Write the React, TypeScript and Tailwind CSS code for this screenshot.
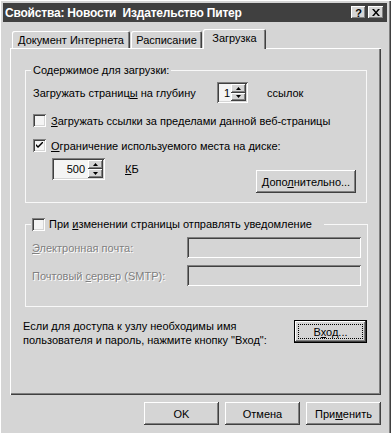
import type { ReactNode } from 'react';

const raised =
  'shadow-[inset_-1px_-1px_0_#404040,inset_1px_1px_0_#ffffff,inset_-2px_-2px_0_#808080]';
const sunken =
  'shadow-[inset_1px_1px_0_#808080,inset_-1px_-1px_0_#ffffff,inset_2px_2px_0_#404040,inset_-2px_-2px_0_#d5d5d5]';

function U({ children }: { children: ReactNode }) {
  return <span className="underline underline-offset-[1px]">{children}</span>;
}

function SpinArrow({ up }: { up?: boolean }) {
  return (
    <div className={`flex-1 flex items-center justify-center bg-[#d5d5d5] ${raised}`}>
      <svg width="5" height="3" viewBox="0 0 5 3">
        {up ? <path d="M2.5 0 L5 3 L0 3 Z" fill="#000" /> : <path d="M0 0 L5 0 L2.5 3 Z" fill="#000" />}
      </svg>
    </div>
  );
}

function Spinner({ value, className, align }: { value: string; className: string; align: string }) {
  return (
    <div className={`flex p-[2px] bg-[#f4f4f4] ${sunken} ${className}`}>
      <div className={`flex-1 flex items-center ${align}`}>{value}</div>
      <div className="flex flex-col w-[15px]">
        <SpinArrow up />
        <SpinArrow />
      </div>
    </div>
  );
}

function Checkbox({ checked }: { checked?: boolean }) {
  return (
    <div className={`w-[13px] h-[13px] shrink-0 bg-[#f4f4f4] flex items-center justify-center ${sunken}`}>
      {checked && (
        <svg width="7" height="7" viewBox="0 0 7 7">
          <path d="M0 2 L0 4 L2 6 L7 1 L7 -1 L2 4 Z" fill="#000" />
        </svg>
      )}
    </div>
  );
}

function Button({ children, className }: { children: ReactNode; className: string }) {
  return (
    <div className={`flex items-center justify-center bg-[#d5d5d5] ${raised} ${className}`}>{children}</div>
  );
}

export default function App() {
  return (
    <div
      className="w-[391px] h-[433px] overflow-hidden bg-[#d5d5d5] text-[11px] leading-[14px] text-black pt-[3px] pl-[3px] pr-[4px] shadow-[inset_1px_1px_0_#ffffff,inset_-1px_0_0_#404040,inset_-2px_0_0_#808080]"
      style={{ fontFamily: '"Liberation Sans", Arial, sans-serif' }}
    >
      {/* Title bar */}
      <div className="h-[19px] bg-[#404040] flex items-center pl-[2px] pr-[3px]">
        <span className="text-white font-bold text-[12px] tracking-[-0.2px]">
          Свойства: Новости&nbsp; Издательство Питер
        </span>
        <div className="ml-auto flex gap-[2px]">
          <Button className="w-[15px] h-[13px] font-bold text-[11px]">?</Button>
          <Button className="w-[16px] h-[13px]">
            <svg width="8" height="7" viewBox="0 0 8 7">
              <path d="M0 0 L2 0 L4 2.5 L6 0 L8 0 L5 3.5 L8 7 L6 7 L4 4.5 L2 7 L0 7 L3 3.5 Z" fill="#000" />
            </svg>
          </Button>
        </div>
      </div>

      <div className="pl-[7px] pr-[6px]">
        {/* Tabs */}
        <div className="mt-[7px] h-[19px] flex items-end">
          <div className="ml-[2px] w-[118px] h-[17px] flex items-center justify-center rounded-t-[2px] shadow-[inset_1px_1px_0_#ffffff,inset_-1px_0_0_#404040,inset_-2px_0_0_#808080]">
            Документ Интернета
          </div>
          <div className="ml-[1px] w-[71px] h-[17px] flex items-center justify-center rounded-t-[2px] shadow-[inset_1px_1px_0_#ffffff,inset_-1px_0_0_#404040,inset_-2px_0_0_#808080]">
            Расписание
          </div>
          <div className="relative z-10 -mb-px ml-[1px] w-[63px] h-[20px] pb-[2px] bg-[#d5d5d5] flex items-center justify-center rounded-t-[2px] shadow-[inset_1px_1px_0_#ffffff,inset_-1px_0_0_#404040,inset_-2px_0_0_#808080]">
            Загрузка
          </div>
        </div>

        {/* Panel */}
        <div className="h-[347px] pt-[15px] pl-[15px] pr-[14px] shadow-[inset_1px_1px_0_#ffffff,inset_-1px_-1px_0_#404040,inset_-2px_-2px_0_#808080]">
          <fieldset className="border border-[#f8f8f8] pl-[5px] pr-[10px] pb-[9px]">
            <legend className="px-[2px] leading-[14px]">Содержимое для загрузки:</legend>
            <div className="pl-[2px]">
              <div className="mt-[5px] flex items-center h-[21px]">
                <span className="w-[184px]">
                  Загружать страниц<U>ы</U> на глубину
                </span>
                <Spinner value="1" className="w-[31px] h-[21px]" align="justify-start pl-[5px]" />
                <span className="ml-[19px]">ссылок</span>
              </div>
              <div className="mt-[11px] flex items-center h-[13px]">
                <Checkbox />
                <span className="ml-[5px]">
                  <U>З</U>агружать ссылки за пределами данной веб-страницы
                </span>
              </div>
              <div className="mt-[12px] flex items-center h-[13px]">
                <Checkbox checked />
                <span className="ml-[5px]">
                  <U>О</U>граничение используемого места на диске:
                </span>
              </div>
              <div className="mt-[6px] flex items-start h-[35px]">
                <Spinner value="500" className="ml-[19px] w-[53px] h-[22px]" align="justify-end pr-[3px]" />
                <span className="ml-[20px] mt-[4px]">
                  <U>К</U>Б
                </span>
                <Button className="ml-auto mt-[12px] w-[100px] h-[23px]">
                  <span>
                    Допо<U>л</U>нительно...
                  </span>
                </Button>
              </div>
            </div>
          </fieldset>

          <fieldset className="mt-[14px] border border-[#f8f8f8] pl-[5px] pr-[6px] pb-[20px]">
            <legend className="pl-[1px] pr-[12px] leading-[14px]">
              <div className="flex items-center gap-[4px]">
                <Checkbox />
                <span>
                  При <U>и</U>зменении страницы отправлять уведомление
                </span>
              </div>
            </legend>
            <div className="pl-[1px] text-[#808080] [text-shadow:1px_1px_0_#ffffff]">
              <div className="mt-[6px] flex items-center h-[21px]">
                <span className="w-[155px]">
                  <U>Э</U>лектронная почта:
                </span>
                <div className={`w-[174px] h-[21px] ${sunken}`} />
              </div>
              <div className="mt-[7px] flex items-center h-[21px]">
                <span className="w-[155px]">
                  Почтовый <U>с</U>ервер (SMTP):
                </span>
                <div className={`w-[174px] h-[21px] ${sunken}`} />
              </div>
            </div>
          </fieldset>

          <div className="mt-[12px] -ml-[2px] flex items-start">
            <div className="leading-[14px]">
              Если для доступа к узлу необходимы имя
              <br />
              пользователя и пароль, нажмите кнопку "Вход":
            </div>
            <div className="ml-auto mt-[1px] w-[73px] h-[23px] border border-black">
              <Button className="w-full h-full p-[3px]">
                <div className="w-full h-full flex items-center justify-center border border-dotted border-black">
                  <span>
                    В<U>х</U>од...
                  </span>
                </div>
              </Button>
            </div>
          </div>
        </div>

        {/* Bottom buttons */}
        <div className="mt-[7px] flex justify-end gap-[6px] pr-0">
          <Button className="w-[75px] h-[23px]">OK</Button>
          <Button className="w-[75px] h-[23px]">Отмена</Button>
          <Button className="w-[75px] h-[23px]">
            <span>
              При<U>м</U>енить
            </span>
          </Button>
        </div>
      </div>
    </div>
  );
}
